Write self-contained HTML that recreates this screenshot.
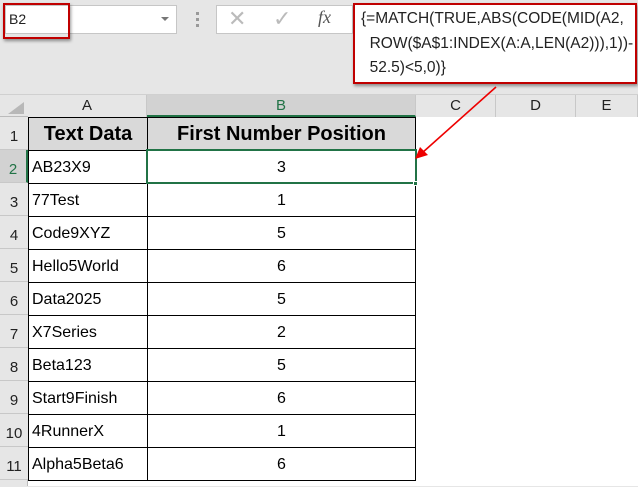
<!DOCTYPE html>
<html><head><style>
*{margin:0;padding:0;box-sizing:border-box}
body{width:638px;height:486px;overflow:hidden;background:#e6e6e6;position:relative;font-family:"Liberation Sans",Arial,sans-serif}
.a{position:absolute}
.hd{position:absolute;background:#e6e6e6;color:#222;font-size:15px;text-align:center;border-right:1px solid #c8c8c8}
.rh{position:absolute;left:0;width:28px;background:#e6e6e6;color:#222;font-size:15px;text-align:center;border-bottom:1px solid #c8c8c8;line-height:40px}
.c{position:absolute;height:34px;border:1px solid #000;font-size:16px;line-height:33px;background:#fff}
</style></head><body>
<div class="a" style="left:5px;top:5px;width:172px;height:29px;background:#fff;border:1px solid #c6c6c6"></div>
<div class="a" style="left:3px;top:3px;width:67px;height:36px;border:2px solid #c00000;box-shadow:1px 2px 3px rgba(0,0,0,.4)"></div>
<div class="a" style="left:9px;top:11px;font-size:14px;color:#222">B2</div>
<div class="a" style="left:161px;top:17px;width:0;height:0;border-left:4px solid transparent;border-right:4px solid transparent;border-top:4px solid #777"></div>
<div class="a" style="left:196px;top:12px;width:3px;height:3px;background:#999;box-shadow:0 6px 0 #999,0 12px 0 #999"></div>
<div class="a" style="left:216px;top:5px;width:137px;height:29px;background:#fff;border:1px solid #c6c6c6"></div>
<div class="a" style="left:228px;top:6px;font-size:22px;color:#bbb">✕</div>
<div class="a" style="left:273px;top:6px;font-size:22px;color:#bbb">✓</div>
<div class="a" style="left:318px;top:7px;font-size:18px;font-style:italic;font-family:'Liberation Serif',serif;color:#555">fx</div>
<div class="a" style="left:353px;top:3px;width:284px;height:81px;background:#fff;border:2px solid #c00000;box-shadow:1px 2px 3px rgba(0,0,0,.4)"></div>
<div class="a" style="left:361px;top:7px;font-size:15.5px;line-height:24.5px;color:#222;white-space:pre">{=MATCH(TRUE,ABS(CODE(MID(A2,
  ROW($A$1:INDEX(A:A,LEN(A2))),1))-
  52.5)&lt;5,0)}</div>
<div class="a" style="left:28px;top:117px;width:610px;height:369px;background:#fff"></div>
<div class="a" style="left:0;top:94px;width:638px;height:23px;border-top:1px solid #d0d0d0;border-bottom:1px solid #bbb"></div>
<div class="a" style="left:8px;top:102px;width:0;height:0;border-left:16px solid transparent;border-bottom:12px solid #b8b8b8"></div>
<div class="hd" style="left:28px;top:95px;width:119px;height:22px;line-height:22px">A</div>
<div class="hd" style="left:147px;top:95px;width:269px;height:22px;line-height:22px;background:#d2d2d2;color:#217346;border-bottom:2px solid #217346">B</div>
<div class="hd" style="left:416px;top:95px;width:80px;height:22px;line-height:22px">C</div>
<div class="hd" style="left:496px;top:95px;width:80px;height:22px;line-height:22px">D</div>
<div class="hd" style="left:576px;top:95px;width:62px;height:22px;line-height:22px">E</div>
<div class="a" style="left:0;top:117px;width:28px;height:369px;background:#e6e6e6;border-right:1px solid #bbb"></div>
<div class="rh" style="top:117px;height:33px">1</div>
<div class="rh" style="top:150px;height:33px;background:#d2d2d2;color:#217346;border-right:2px solid #217346">2</div>
<div class="rh" style="top:183px;height:33px">3</div>
<div class="rh" style="top:216px;height:33px">4</div>
<div class="rh" style="top:249px;height:33px">5</div>
<div class="rh" style="top:282px;height:33px">6</div>
<div class="rh" style="top:315px;height:33px">7</div>
<div class="rh" style="top:348px;height:33px">8</div>
<div class="rh" style="top:381px;height:33px">9</div>
<div class="rh" style="top:414px;height:33px">10</div>
<div class="rh" style="top:447px;height:33px">11</div>
<div class="c" style="left:28px;top:117px;width:120px;background:#d9d9d9;font-weight:bold;font-size:20px;text-align:center">Text Data</div>
<div class="c" style="left:147px;top:117px;width:269px;background:#d9d9d9;font-weight:bold;font-size:20px;text-align:center">First Number Position</div>
<div id="rows"></div>
<script>
var d=[["AB23X9",3],["77Test",1],["Code9XYZ",5],["Hello5World",6],["Data2025",5],["X7Series",2],["Beta123",5],["Start9Finish",6],["4RunnerX",1],["Alpha5Beta6",6]];
var h="";d.forEach(function(r,i){var t=150+i*33;
h+='<div class="c" style="left:28px;top:'+t+'px;width:120px;padding-left:3px">'+r[0]+'</div>';
h+='<div class="c" style="left:147px;top:'+t+'px;width:269px;text-align:center">'+r[1]+'</div>';});
document.getElementById("rows").innerHTML=h;
</script>
<div class="a" style="left:146px;top:149px;width:271px;height:35px;border:2px solid #217346"></div>
<div class="a" style="left:413px;top:181px;width:5px;height:5px;background:#217346;border:1px solid #fff"></div>
<svg class="a" style="left:0;top:0" width="638" height="486">
<line x1="496" y1="87" x2="422" y2="153" stroke="#e00" stroke-width="1.6"/>
<polygon points="415,159 420,147 428,155" fill="#e00"/>
</svg>
</body></html>
